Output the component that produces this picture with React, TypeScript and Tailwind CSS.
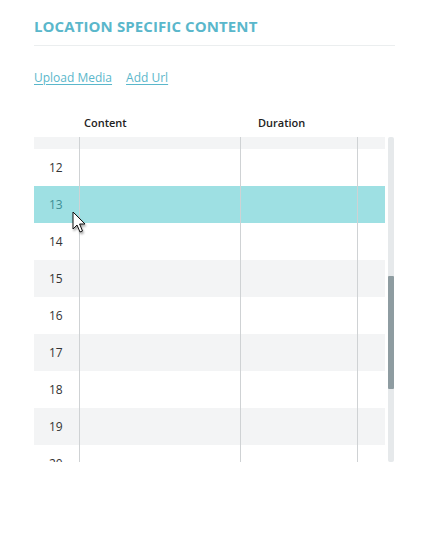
import React from 'react';

const rows = [11, 12, 13, 14, 15, 16, 17, 18, 19, 20];

function Cursor() {
    return (
        <svg width="16" height="24" viewBox="0 0 16 24" className="absolute left-[72px] top-[211px] drop-shadow-[1px_2px_1px_rgba(0,0,0,0.35)]">
            <path
                d="M1 1 L1 18 L5 14 L8 21 L10.5 20 L7.6 13 L13 13 Z"
                fill="#ffffff"
                stroke="#111111"
                strokeWidth="1"
                strokeLinejoin="miter"
            />
        </svg>
    );
}

export default function App() {
    return (
        <div className="relative w-[423px] h-[546px] bg-white font-['Open_Sans',sans-serif]">
            <div className="px-[34px] pt-[16px]">
                <h2 className="text-[15px] font-bold tracking-[0.1px] text-[#5ab7cb] leading-[20px]">
                    LOCATION SPECIFIC CONTENT
                </h2>
                <div className="mt-[9px] h-px w-[361px] bg-[#ebeeef]" />
                <div className="mt-[24px] flex gap-[14px] text-[12px] leading-[16px] text-[#5ab7cb]">
                    <a className="underline underline-offset-2 decoration-[#5ab7cb]">Upload Media</a>
                    <a className="underline underline-offset-2 decoration-[#5ab7cb]">Add Url</a>
                </div>

                <div className="mt-[29px] flex w-[361px]">
                    <div className="w-[351px] shrink-0">
                        <div className="flex h-[22px] items-start text-[11px] font-semibold text-[#222]">
                            <div className="w-[45px] shrink-0" />
                            <div className="w-[161px] shrink-0 pl-[5px]">Content</div>
                            <div className="w-[117px] shrink-0 pl-[18px]">Duration</div>
                            <div className="flex-1" />
                        </div>
                        <div className="h-[325px] overflow-hidden">
                            <div className="-mt-[25px]">
                                {rows.map((n) => (
                                    <div
                                        key={n}
                                        className={`flex h-[37px] ${n === 13 ? 'bg-[#9ee0e3] text-[#3f8e95]' : n % 2 === 1 ? 'bg-[#f3f4f5] text-[#333]' : 'bg-white text-[#333]'}`}
                                    >
                                        <div className="w-[45px] shrink-0 pl-[15px] flex items-center text-[12px]">{n}</div>
                                        <div className="w-[161px] shrink-0 border-l border-[#cfd2d4]" />
                                        <div className="w-[117px] shrink-0 border-l border-[#cfd2d4]" />
                                        <div className="flex-1 border-l border-[#cfd2d4]" />
                                    </div>
                                ))}
                            </div>
                        </div>
                    </div>
                    <div className="ml-[3px] mt-[22px] h-[325px] w-[6px] shrink-0 rounded-[2px] bg-[#e6e9eb] relative">
                        <div className="absolute left-0 top-[139px] h-[113px] w-[6px] rounded-[1px] bg-[#8e9ca1]" />
                    </div>
                </div>
            </div>
            <Cursor />
        </div>
    );
}
